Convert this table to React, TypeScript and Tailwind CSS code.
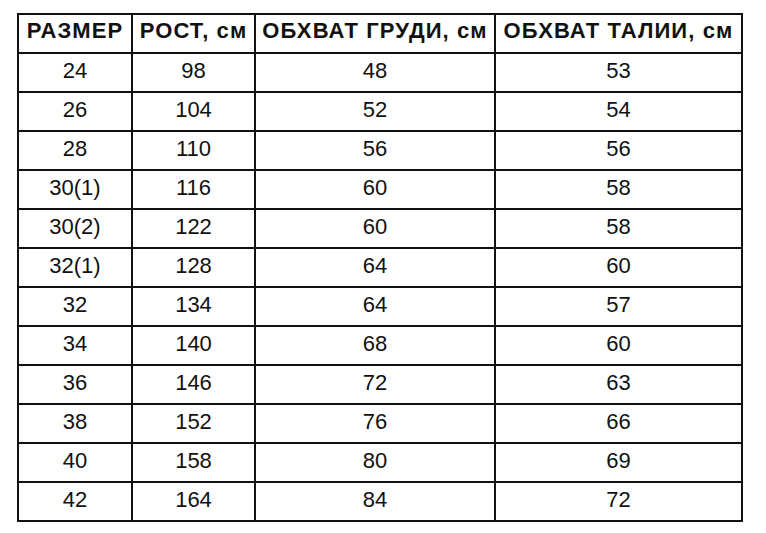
import React from "react";

const headers = ["РАЗМЕР", "РОСТ, см", "ОБХВАТ ГРУДИ, см", "ОБХВАТ ТАЛИИ, см"];

const rows: string[][] = [
  ["24", "98", "48", "53"],
  ["26", "104", "52", "54"],
  ["28", "110", "56", "56"],
  ["30(1)", "116", "60", "58"],
  ["30(2)", "122", "60", "58"],
  ["32(1)", "128", "64", "60"],
  ["32", "134", "64", "57"],
  ["34", "140", "68", "60"],
  ["36", "146", "72", "63"],
  ["38", "152", "76", "66"],
  ["40", "158", "80", "69"],
  ["42", "164", "84", "72"],
];

const colWidths = ["w-[114px]", "w-[123px]", "w-[240px]", "w-[247px]"];

export default function App() {
  return (
    <div className="w-[766px] h-[533px] bg-white pt-[13px] pl-[17px] font-['Liberation_Sans',Arial,sans-serif] text-[#111]">
      <div className="inline-flex flex-col border-l-2 border-t-2 border-[#111]">
        {/* Header */}
        <div className="flex">
          {headers.map((h, i) => (
            <div
              key={h}
              className={`${colWidths[i]} h-[39px] border-r-2 border-b-2 border-[#111] flex items-center justify-center pb-[6px] text-[22px] tracking-[1.1px] font-bold whitespace-nowrap`}
            >
              {h}
            </div>
          ))}
        </div>

        {rows.map((r, ri) => (
          <div key={ri} className="flex">
            {r.map((v, ci) => (
              <div
                key={ci}
                className={`${colWidths[ci]} h-[39px] border-r-2 border-b-2 border-[#111] flex items-center justify-center pb-[5px] text-[22px]`}
              >
                {v}
              </div>
            ))}
          </div>
        ))}
      </div>
    </div>
  );
}
